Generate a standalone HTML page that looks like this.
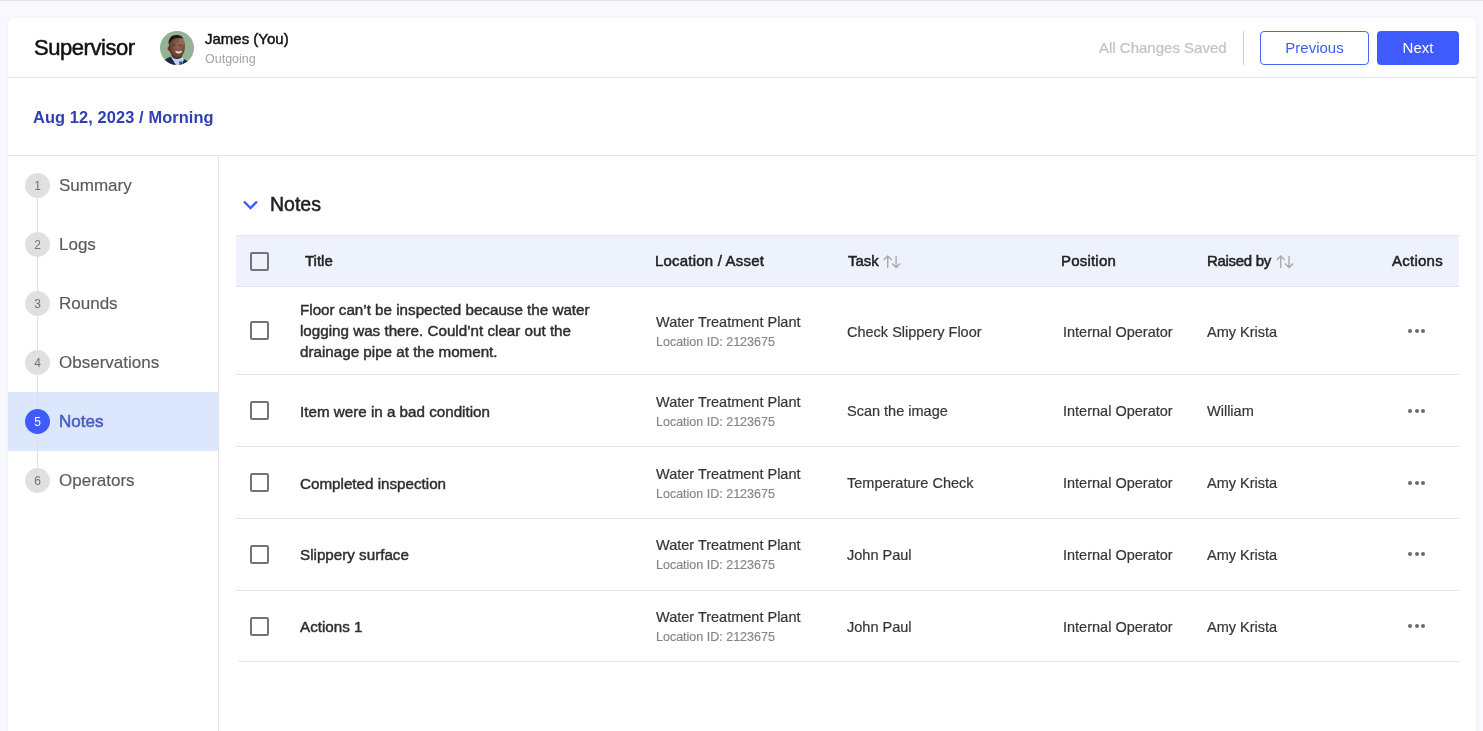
<!DOCTYPE html>
<html><head><meta charset="utf-8">
<style>
*{box-sizing:border-box;margin:0;padding:0}
html,body{width:1483px;height:731px;overflow:hidden}
body{background:#f8f9fe;font-family:"Liberation Sans",sans-serif;position:relative;color:#333}
.topline{position:absolute;left:0;top:0;width:1483px;height:1px;background:#e2e2e2}
.card{position:absolute;left:8px;top:18px;width:1468px;height:740px;background:#fff;border-radius:6px;box-shadow:0 1px 4px rgba(20,20,60,0.07)}
.abs{position:absolute;white-space:nowrap}
.hline{position:absolute;height:1px;background:#e4e4e4}
.vline{position:absolute;width:1px;background:#e4e4e4}
.step{position:absolute;left:25px;width:25px;height:25px;border-radius:50%;background:#e0e0e0;color:#717171;font-size:12px;text-align:center;line-height:27px}
.steplbl{position:absolute;left:59px;font-size:17px;color:#5a5a5a;-webkit-text-stroke:0.15px #5a5a5a;line-height:20px}
.cb{position:absolute;left:250px;width:19px;height:19px;border:2px solid #747474;border-radius:2px}
.th{position:absolute;font-size:15px;font-weight:normal;color:#222;-webkit-text-stroke:0.5px #222;line-height:16px;top:253px}
.td{position:absolute;font-size:14.5px;color:#363636;-webkit-text-stroke:0.2px #363636;line-height:17px;white-space:nowrap}
.tt{position:absolute;font-size:15.2px;font-weight:normal;-webkit-text-stroke:0.45px #2e2e2e;color:#2e2e2e;line-height:21px;white-space:nowrap;left:300px}
.sub{position:absolute;font-size:12.5px;color:#868686;-webkit-text-stroke:0.15px #868686;line-height:15px;white-space:nowrap}
.dots{position:absolute;left:1408px;width:17px;height:4px}
.dots i{position:absolute;top:0;width:4px;height:4px;border-radius:50%;background:#6b6b6b}
</style></head>
<body><div style="position:absolute;left:0;top:0;width:1483px;height:731px;will-change:transform">
<div class="topline"></div>
<div class="card"></div>

<!-- header -->
<div class="abs" style="left:34px;top:36px;font-size:22px;letter-spacing:-0.45px;line-height:24px;color:#111;-webkit-text-stroke:0.5px #111;">Supervisor</div>
<svg class="abs" style="left:160px;top:31px" width="34" height="34" viewBox="0 0 34 34">
  <defs><clipPath id="av"><circle cx="17" cy="17" r="17"/></clipPath>
  <radialGradient id="fg" cx="0.6" cy="0.45" r="0.65"><stop offset="0" stop-color="#9a6a54"/><stop offset="0.55" stop-color="#77503c"/><stop offset="1" stop-color="#4d2f21"/></radialGradient></defs>
  <g clip-path="url(#av)">
    <rect width="34" height="34" fill="#93b394"/>
    <path d="M2 34 L4 29.5 Q7.5 26.5 11 25.5 L16 34 Z" fill="#1c2946"/>
    <path d="M22.5 27.5 Q26 28.5 28.5 31 L28 34 L21.5 34 Z" fill="#1c2946"/>
    <path d="M10.8 25.5 L16 34 L21.8 34 L24 28 L21.5 25.5 Z" fill="#bdd3ef"/>
    <path d="M19.2 30.5 L22.3 30.5 L21.8 34 L19.4 34 Z" fill="#2e4c84"/>
    <ellipse cx="17" cy="24.5" rx="5.2" ry="3.6" fill="#3b2217"/>
    <ellipse cx="9.2" cy="17.5" rx="1.6" ry="2.6" fill="#6a3f2c"/>
    <ellipse cx="17" cy="15.6" rx="8.1" ry="11.4" fill="url(#fg)"/>
    <ellipse cx="21.8" cy="10.5" rx="2.6" ry="3.8" fill="#a77a64" opacity="0.55"/>
    <path d="M8.6 13.5 C8.2 7 11.5 4 16.5 4 C19.5 4 22 5 23.5 7.5 C20 6 14 6.5 11.5 9.5 C10.3 11 9.6 12.5 8.6 13.5 Z" fill="#22150f"/>
    <path d="M12.5 14.2 L15.2 14 M18.6 14 L21.6 14.2" stroke="#2a170f" stroke-width="1" opacity="0.8"/>
    <path d="M15.6 20.6 Q18.8 23.6 21.8 20.4 Q18.8 21.5 15.6 20.6 Z" fill="#efe9e2" stroke="#efe9e2" stroke-width="0.9"/>
  </g>
</svg>
<div class="abs" style="left:205px;top:31px;font-size:15px;line-height:16px;color:#111;-webkit-text-stroke:0.45px #111;">James (You)</div>
<div class="abs" style="left:205px;top:52px;font-size:12.5px;line-height:14px;color:#a3a3a3;">Outgoing</div>

<div class="abs" style="left:1099px;top:39px;font-size:15px;line-height:17px;color:#c2c2c2;-webkit-text-stroke:0.2px #c2c2c2;">All Changes Saved</div>
<div class="vline" style="left:1243px;top:31px;height:34px;background:#cdcdcd"></div>
<div class="abs" style="left:1260px;top:31px;width:109px;height:34px;border:1px solid #4a64f5;border-radius:4px;color:#3f5af0;font-size:15px;text-align:center;line-height:32px;">Previous</div>
<div class="abs" style="left:1377px;top:31px;width:82px;height:34px;background:#3f5bfd;border-radius:4px;color:#fff;font-size:15px;text-align:center;line-height:34px;">Next</div>

<div class="hline" style="left:8px;top:77px;width:1468px"></div>
<div class="abs" style="left:33px;top:108px;font-size:16.4px;font-weight:bold;letter-spacing:0.1px;line-height:19px;color:#2e40b4;">Aug 12, 2023 / Morning</div>
<div class="hline" style="left:8px;top:155px;width:1468px"></div>

<!-- sidebar -->
<div class="vline" style="left:218px;top:156px;height:580px"></div>
<div class="abs" style="left:8px;top:392px;width:210px;height:59px;background:#dce7fd"></div>
<div class="vline" style="left:37px;top:186px;height:295px;background:#e0e0e0"></div>
<div class="step" style="top:173px">1</div>
<div class="steplbl" style="top:176px">Summary</div>
<div class="step" style="top:232px">2</div>
<div class="steplbl" style="top:235px">Logs</div>
<div class="step" style="top:291px">3</div>
<div class="steplbl" style="top:294px">Rounds</div>
<div class="step" style="top:350px">4</div>
<div class="steplbl" style="top:353px">Observations</div>
<div class="step" style="top:409px;background:#3f5bfd;color:#fff">5</div>
<div class="steplbl" style="top:412px;color:#4a5cc4;-webkit-text-stroke:0.55px #4a5cc4">Notes</div>
<div class="step" style="top:468px">6</div>
<div class="steplbl" style="top:471px">Operators</div>

<!-- content -->
<svg class="abs" style="left:242px;top:199px" width="17" height="12" viewBox="0 0 17 12"><path d="M2 2.5 L8.5 9 L15 2.5" stroke="#3f5bfd" stroke-width="2.4" fill="none"/></svg>
<div class="abs" style="left:270px;top:193px;font-size:19.5px;line-height:22px;color:#222;-webkit-text-stroke:0.5px #222;">Notes</div>

<div class="abs" style="left:236px;top:235px;width:1223px;height:52px;background:#eef2fd;border-top:1px solid #e2e4ea;border-bottom:1px solid #e2e4ea"></div>
<div class="cb" style="top:252px"></div>
<div class="th" style="left:305px">Title</div>
<div class="th" style="left:655px;letter-spacing:0.2px">Location / Asset</div>
<div class="th" style="left:848px">Task</div>
<svg class="abs" style="left:882px;top:254px" width="20" height="16" viewBox="0 0 20 16"><path d="M5.7 2 V14 M1.7 6 L5.7 2 L9.7 6 M14.1 2 V13.6 M10.1 9.6 L14.1 13.6 L18.1 9.6" stroke="#aaa" stroke-width="1.4" fill="none"/></svg>
<div class="th" style="left:1061px;letter-spacing:0.2px">Position</div>
<div class="th" style="left:1207px;letter-spacing:-0.3px">Raised by</div>
<svg class="abs" style="left:1275px;top:254px" width="20" height="16" viewBox="0 0 20 16"><path d="M5.7 2 V14 M1.7 6 L5.7 2 L9.7 6 M14.1 2 V13.6 M10.1 9.6 L14.1 13.6 L18.1 9.6" stroke="#aaa" stroke-width="1.4" fill="none"/></svg>
<div class="th" style="left:1392px;letter-spacing:0.25px">Actions</div>

<!-- row 1 -->
<div class="cb" style="top:321px"></div>
<div class="tt" style="top:299px;white-space:normal;width:300px">Floor can’t be inspected because the water<br>logging was there. Could’nt clear out the<br>drainage pipe at the moment.</div>
<div class="td" style="left:656px;top:314px">Water Treatment Plant</div>
<div class="sub" style="left:656px;top:335px">Location ID: 2123675</div>
<div class="td" style="left:847px;top:324px">Check Slippery Floor</div>
<div class="td" style="left:1063px;top:324px">Internal Operator</div>
<div class="td" style="left:1207px;top:324px">Amy Krista</div>
<div class="dots" style="top:329px"><i style="left:0"></i><i style="left:6.5px"></i><i style="left:13px"></i></div>
<div class="hline" style="left:236px;top:374px;width:1223px"></div>

<!-- row 2 -->
<div class="cb" style="top:401px"></div>
<div class="tt" style="top:401px">Item were in a bad condition</div>
<div class="td" style="left:656px;top:394px">Water Treatment Plant</div>
<div class="sub" style="left:656px;top:415px">Location ID: 2123675</div>
<div class="td" style="left:847px;top:403px">Scan the image</div>
<div class="td" style="left:1063px;top:403px">Internal Operator</div>
<div class="td" style="left:1207px;top:403px">William</div>
<div class="dots" style="top:409px"><i style="left:0"></i><i style="left:6.5px"></i><i style="left:13px"></i></div>
<div class="hline" style="left:236px;top:446px;width:1223px"></div>

<!-- row 3 -->
<div class="cb" style="top:473px"></div>
<div class="tt" style="top:473px">Completed inspection</div>
<div class="td" style="left:656px;top:466px">Water Treatment Plant</div>
<div class="sub" style="left:656px;top:487px">Location ID: 2123675</div>
<div class="td" style="left:847px;top:475px">Temperature Check</div>
<div class="td" style="left:1063px;top:475px">Internal Operator</div>
<div class="td" style="left:1207px;top:475px">Amy Krista</div>
<div class="dots" style="top:481px"><i style="left:0"></i><i style="left:6.5px"></i><i style="left:13px"></i></div>
<div class="hline" style="left:236px;top:518px;width:1223px"></div>

<!-- row 4 -->
<div class="cb" style="top:545px"></div>
<div class="tt" style="top:544px">Slippery surface</div>
<div class="td" style="left:656px;top:537px">Water Treatment Plant</div>
<div class="sub" style="left:656px;top:558px">Location ID: 2123675</div>
<div class="td" style="left:847px;top:547px">John Paul</div>
<div class="td" style="left:1063px;top:547px">Internal Operator</div>
<div class="td" style="left:1207px;top:547px">Amy Krista</div>
<div class="dots" style="top:552px"><i style="left:0"></i><i style="left:6.5px"></i><i style="left:13px"></i></div>
<div class="hline" style="left:236px;top:590px;width:1223px"></div>

<!-- row 5 -->
<div class="cb" style="top:617px"></div>
<div class="tt" style="top:616px">Actions 1</div>
<div class="td" style="left:656px;top:609px">Water Treatment Plant</div>
<div class="sub" style="left:656px;top:630px">Location ID: 2123675</div>
<div class="td" style="left:847px;top:619px">John Paul</div>
<div class="td" style="left:1063px;top:619px">Internal Operator</div>
<div class="td" style="left:1207px;top:619px">Amy Krista</div>
<div class="dots" style="top:624px"><i style="left:0"></i><i style="left:6.5px"></i><i style="left:13px"></i></div>
<div class="hline" style="left:238px;top:661px;width:1221px"></div>

</div></body></html>
